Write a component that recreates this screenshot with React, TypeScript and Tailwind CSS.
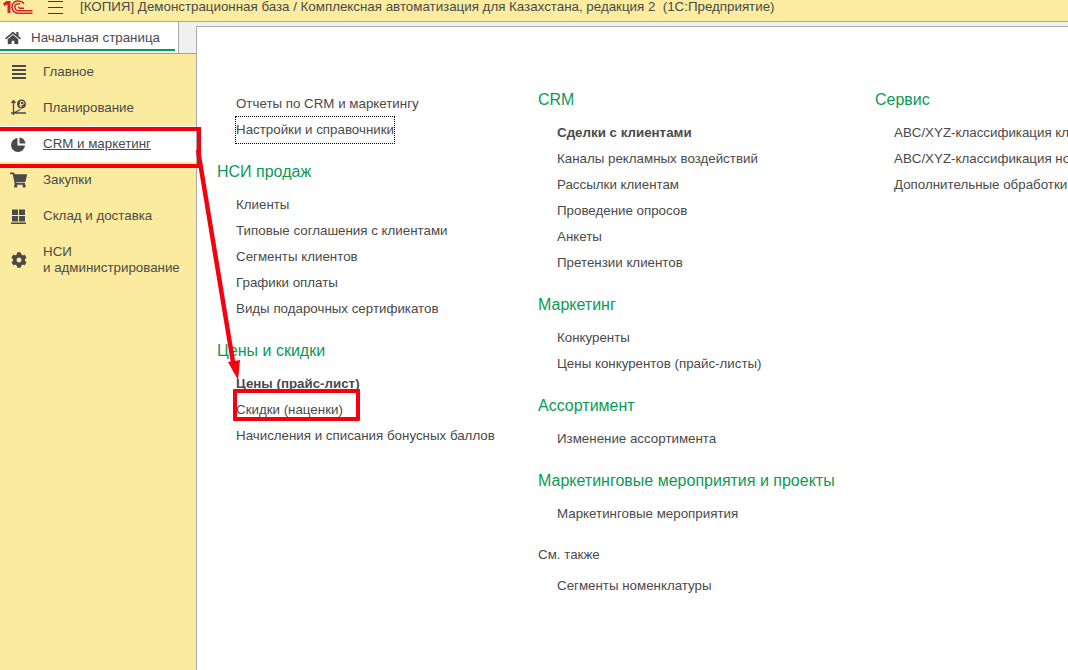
import { FaCog, FaHome, FaShoppingCart } from "react-icons/fa";

const sideItems = [
  { label: "Главное", icon: <MenuIcon /> },
  { label: "Планирование", icon: <PlanIcon /> },
  { label: "CRM и маркетинг", icon: <PieIcon />, active: true },
  { label: "Закупки", icon: <FaShoppingCart className="w-[17px] h-[16px]" /> },
  { label: "Склад и доставка", icon: <StockIcon /> },
];

function MenuIcon() {
  return (
    <svg width="16" height="14" viewBox="0 0 16 14" fill="#4a4a4a">
      <rect x="1" y="0" width="14" height="2" />
      <rect x="1" y="4" width="14" height="2" />
      <rect x="1" y="8" width="14" height="2" />
      <rect x="1" y="12" width="14" height="2" />
    </svg>
  );
}

function PlanIcon() {
  return (
    <svg width="18" height="18" viewBox="0 0 18 18" fill="none" stroke="#4a4a4a" strokeWidth="1.3">
      <path d="M3.5 16V2M1.5 4l2-2.5 2 2.5M1 14h15M3.5 14l7-3.5" />
      <circle cx="11.5" cy="5" r="4.5" fill="#4a4a4a" stroke="none" />
      <path d="M10.5 8V2.5h2a1.4 1.4 0 0 1 0 3h-3M9.5 7h3" stroke="#fbeb9e" strokeWidth="1" />
    </svg>
  );
}

function PieIcon() {
  return (
    <svg width="15" height="15" viewBox="0 0 15 15" fill="#4a4a4a">
      <path d="M6.5 1v7.5H14A7 7 0 1 1 6.5 1z" />
      <path d="M8.5 0.5A6.5 6.5 0 0 1 14.5 6.5H8.5z" />
    </svg>
  );
}

function StockIcon() {
  return (
    <svg width="15" height="15" viewBox="0 0 15 15" fill="#4a4a4a">
      <rect x="1" y="0.5" width="6" height="5.5" />
      <rect x="8" y="0.5" width="6" height="5.5" />
      <rect x="1" y="7" width="6" height="5.5" />
      <rect x="8" y="7" width="6" height="5.5" />
      <rect x="0" y="13.5" width="15" height="1.5" />
    </svg>
  );
}

function Logo() {
  return (
    <svg width="30" height="14" viewBox="0 0 30 14" fill="none" stroke="#d4242b">
      <path d="M0 3.5L3.5 1H7.5V13H4.5V4.5L1.5 6z" fill="#d4242b" stroke="none" />
      <path d="M16 1.2C12.5 0.6 9 3 9 7s3 6.2 6 6.2H29.5" strokeWidth="1.5" />
      <path d="M17 4C14.5 3 11.8 4.6 11.8 7s2 3.8 3.7 3.8H29.5" strokeWidth="1.5" />
      <path d="M21 3.8C20 2 18 1.2 16 1.2M16.5 8.3H21" strokeWidth="1.5" />
      <path d="M15.5 6.6c0 1 .5 1.7 1.5 1.7" strokeWidth="1.5" />
    </svg>
  );
}

function Item({ text, bold, focus }: { text: string; bold?: boolean; focus?: boolean }) {
  return (
    <div className="h-[26px] flex items-center pl-[19px] whitespace-nowrap">
      <span
        className={`${bold ? "font-bold" : ""} ${
          focus ? "outline outline-1 outline-dotted outline-black py-[3px]" : ""
        }`}
      >
        {text}
      </span>
    </div>
  );
}

function Heading({ text, first }: { text: string; first?: boolean }) {
  return (
    <div
      className={`h-[20px] flex items-center text-[16px] text-[#0a9a55] whitespace-nowrap mb-[10px] ${
        first ? "" : "mt-[19px]"
      }`}
    >
      {text}
    </div>
  );
}

export default function App() {
  return (
    <div className="relative w-[1068px] h-[670px] overflow-hidden flex flex-col bg-white text-[13.33px] text-[#4a4a4a] font-['Liberation_Sans',Arial,sans-serif]">
      {/* Title bar */}
      <div className="h-[22px] bg-[#fbeca0] border-b border-[#b8ad70] flex items-start shrink-0">
        <div className="ml-[3px] w-[45px]">
          <Logo />
        </div>
        <div className="w-[15px] h-[13px] flex flex-col justify-between mt-px">
          <div className="h-px bg-[#3a3a3a]" />
          <div className="h-px bg-[#3a3a3a]" />
          <div className="h-px bg-[#3a3a3a]" />
        </div>
        <div className="ml-[17px] leading-[13px] whitespace-pre text-[#4a4a4a]">
          [КОПИЯ] Демонстрационная база / Комплексная автоматизация для Казахстана, редакция 2{"  "}(1С:Предприятие)
        </div>
      </div>

      <div className="flex flex-1 min-h-0">
        {/* Left side */}
        <div className="w-[196px] flex flex-col shrink-0">
          <div className="h-[31px] flex bg-[#f0f0f0] shrink-0">
            <div className="w-[179px] bg-white border-r border-[#a8a8a8] pt-[6px]">
              <div className="flex items-center h-[19px]">
                <FaHome className="ml-[5px] w-[16px] h-[14px] text-[#4a4a4a]" />
                <span className="ml-[10px]">Начальная страница</span>
              </div>
              <div className="h-[2px] w-[175px] bg-[#0a9a55] mt-[2px]" />
            </div>
          </div>
          <div className="flex-1 bg-[#fbeb9e] border-t border-[#a8a08a]">
            {sideItems.map((item) => (
              <div
                key={item.label}
                className={`h-[36px] flex items-center ${item.active ? "bg-white" : ""}`}
              >
                <div className="w-[43px] flex justify-center pr-[6px]">{item.icon}</div>
                <span className={item.active ? "underline" : ""}>{item.label}</span>
              </div>
            ))}
            <div className="h-[52px] flex items-center">
              <div className="w-[43px] flex justify-center pr-[6px]">
                <FaCog className="w-[16px] h-[16px]" />
              </div>
              <span className="leading-[16px]">
                НСИ
                <br />
                и администрирование
              </span>
            </div>
          </div>
        </div>

        {/* Content */}
        <div className="flex-1 min-w-0 bg-[#f0f0f0] pt-[4px]">
          <div className="h-full bg-white border-t border-l border-[#a8a8a8] flex overflow-hidden">
            <div className="w-[321px] shrink-0 ml-[20px] pt-[64px]">
              <Item text="Отчеты по CRM и маркетингу" />
              <Item text="Настройки и справочники" focus />
              <Heading text="НСИ продаж" />
              <Item text="Клиенты" />
              <Item text="Типовые соглашения с клиентами" />
              <Item text="Сегменты клиентов" />
              <Item text="Графики оплаты" />
              <Item text="Виды подарочных сертификатов" />
              <Heading text="Цены и скидки" />
              <Item text="Цены (прайс-лист)" bold />
              <Item text="Скидки (наценки)" />
              <Item text="Начисления и списания бонусных баллов" />
            </div>
            <div className="w-[337px] shrink-0 pt-[63px]">
              <Heading text="CRM" first />
              <Item text="Сделки с клиентами" bold />
              <Item text="Каналы рекламных воздействий" />
              <Item text="Рассылки клиентам" />
              <Item text="Проведение опросов" />
              <Item text="Анкеты" />
              <Item text="Претензии клиентов" />
              <Heading text="Маркетинг" />
              <Item text="Конкуренты" />
              <Item text="Цены конкурентов (прайс-листы)" />
              <Heading text="Ассортимент" />
              <Item text="Изменение ассортимента" />
              <Heading text="Маркетинговые мероприятия и проекты" />
              <Item text="Маркетинговые мероприятия" />
              <div className="h-[20px] flex items-center mt-[18px] mb-[8px]">См. также</div>
              <Item text="Сегменты номенклатуры" />
            </div>
            <div className="shrink-0 pt-[63px]">
              <Heading text="Сервис" first />
              <Item text="ABC/XYZ-классификация клиентов" />
              <Item text="ABC/XYZ-классификация номенклатуры" />
              <Item text="Дополнительные обработки" />
            </div>
          </div>
        </div>
      </div>

      {/* Red annotations */}
      <div className="absolute left-[-4px] top-[127px] w-[205px] h-[41px] border-[4px] border-[#f5000f]" />
      <div className="absolute left-[233px] top-[389px] w-[127px] h-[32px] border-[4px] rounded-[1px] border-[#f5000f]" />
      <svg className="absolute left-0 top-0 pointer-events-none" width="1068" height="670" fill="#f5000f">
        <path d="M198 150L233 362" stroke="#f5000f" strokeWidth="4.5" />
        <path d="M228 362L240 360L238 380z" />
      </svg>
    </div>
  );
}
